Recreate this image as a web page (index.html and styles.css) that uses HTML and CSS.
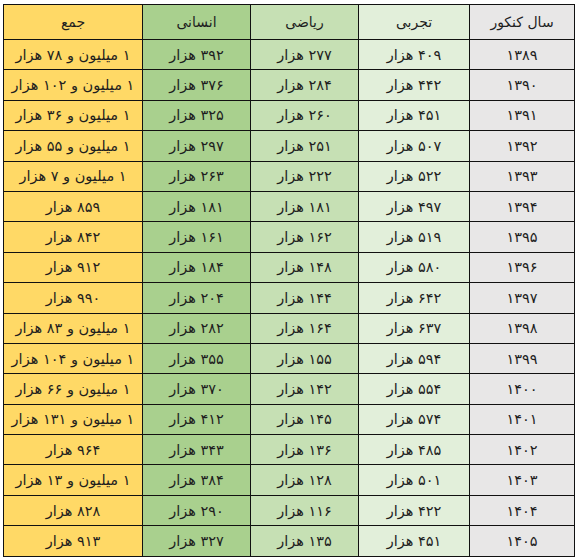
FILE: index.html
```html
<!DOCTYPE html>
<html lang="fa" dir="rtl">
<head>
<meta charset="utf-8">
<title>آمار داوطلبان کنکور</title>
<link rel="stylesheet" href="styles.css">
</head>
<body>
<table class="stats">
  <colgroup>
    <col class="c-year">
    <col class="c-tajrobi">
    <col class="c-riazi">
    <col class="c-ensani">
    <col class="c-total">
  </colgroup>
  <thead>
    <tr>
      <th class="year">سال کنکور</th>
      <th class="tajrobi">تجربی</th>
      <th class="riazi">ریاضی</th>
      <th class="ensani">انسانی</th>
      <th class="total">جمع</th>
    </tr>
  </thead>
  <tbody>
    <tr><td class="year">۱۳۸۹</td><td class="tajrobi">۴۰۹ هزار</td><td class="riazi">۲۷۷ هزار</td><td class="ensani">۳۹۲ هزار</td><td class="total">۱ میلیون و ۷۸ هزار</td></tr>
    <tr><td class="year">۱۳۹۰</td><td class="tajrobi">۴۴۲ هزار</td><td class="riazi">۲۸۴ هزار</td><td class="ensani">۳۷۶ هزار</td><td class="total">۱ میلیون و ۱۰۲ هزار</td></tr>
    <tr><td class="year">۱۳۹۱</td><td class="tajrobi">۴۵۱ هزار</td><td class="riazi">۲۶۰ هزار</td><td class="ensani">۳۲۵ هزار</td><td class="total">۱ میلیون و ۳۶ هزار</td></tr>
    <tr><td class="year">۱۳۹۲</td><td class="tajrobi">۵۰۷ هزار</td><td class="riazi">۲۵۱ هزار</td><td class="ensani">۲۹۷ هزار</td><td class="total">۱ میلیون و ۵۵ هزار</td></tr>
    <tr><td class="year">۱۳۹۳</td><td class="tajrobi">۵۲۲ هزار</td><td class="riazi">۲۲۲ هزار</td><td class="ensani">۲۶۳ هزار</td><td class="total">۱ میلیون و ۷ هزار</td></tr>
    <tr><td class="year">۱۳۹۴</td><td class="tajrobi">۴۹۷ هزار</td><td class="riazi">۱۸۱ هزار</td><td class="ensani">۱۸۱ هزار</td><td class="total">۸۵۹ هزار</td></tr>
    <tr><td class="year">۱۳۹۵</td><td class="tajrobi">۵۱۹ هزار</td><td class="riazi">۱۶۲ هزار</td><td class="ensani">۱۶۱ هزار</td><td class="total">۸۴۲ هزار</td></tr>
    <tr><td class="year">۱۳۹۶</td><td class="tajrobi">۵۸۰ هزار</td><td class="riazi">۱۴۸ هزار</td><td class="ensani">۱۸۴ هزار</td><td class="total">۹۱۲ هزار</td></tr>
    <tr><td class="year">۱۳۹۷</td><td class="tajrobi">۶۴۲ هزار</td><td class="riazi">۱۴۴ هزار</td><td class="ensani">۲۰۴ هزار</td><td class="total">۹۹۰ هزار</td></tr>
    <tr><td class="year">۱۳۹۸</td><td class="tajrobi">۶۳۷ هزار</td><td class="riazi">۱۶۴ هزار</td><td class="ensani">۲۸۲ هزار</td><td class="total">۱ میلیون و ۸۳ هزار</td></tr>
    <tr><td class="year">۱۳۹۹</td><td class="tajrobi">۵۹۴ هزار</td><td class="riazi">۱۵۵ هزار</td><td class="ensani">۳۵۵ هزار</td><td class="total">۱ میلیون و ۱۰۴ هزار</td></tr>
    <tr><td class="year">۱۴۰۰</td><td class="tajrobi">۵۵۴ هزار</td><td class="riazi">۱۴۲ هزار</td><td class="ensani">۳۷۰ هزار</td><td class="total">۱ میلیون و ۶۶ هزار</td></tr>
    <tr><td class="year">۱۴۰۱</td><td class="tajrobi">۵۷۴ هزار</td><td class="riazi">۱۴۵ هزار</td><td class="ensani">۴۱۲ هزار</td><td class="total">۱ میلیون و ۱۳۱ هزار</td></tr>
    <tr><td class="year">۱۴۰۲</td><td class="tajrobi">۴۸۵ هزار</td><td class="riazi">۱۳۶ هزار</td><td class="ensani">۳۴۳ هزار</td><td class="total">۹۶۴ هزار</td></tr>
    <tr><td class="year">۱۴۰۳</td><td class="tajrobi">۵۰۱ هزار</td><td class="riazi">۱۲۸ هزار</td><td class="ensani">۳۸۴ هزار</td><td class="total">۱ میلیون و ۱۳ هزار</td></tr>
    <tr><td class="year">۱۴۰۴</td><td class="tajrobi">۴۲۲ هزار</td><td class="riazi">۱۱۶ هزار</td><td class="ensani">۲۹۰ هزار</td><td class="total">۸۲۸ هزار</td></tr>
    <tr><td class="year">۱۴۰۵</td><td class="tajrobi">۴۵۱ هزار</td><td class="riazi">۱۳۵ هزار</td><td class="ensani">۳۲۷ هزار</td><td class="total">۹۱۳ هزار</td></tr>
  </tbody>
</table>
</body>
</html>
```

FILE: styles.css
```css
html, body {
  margin: 0;
  padding: 0;
  background: #ffffff;
}
body {
  padding: 4px 3px 0 4px;
  font-family: "DejaVu Sans", sans-serif;
  color: #1e1e1e;
}
.stats {
  border-collapse: collapse;
  table-layout: fixed;
  width: 571px;
  font-size: 14.5px;
}
.c-year { width: 105px; }
.c-tajrobi { width: 111px; }
.c-riazi { width: 108px; }
.c-ensani { width: 108px; }
.c-total { width: 139px; }
.stats th,
.stats td {
  border: 1px solid #111;
  text-align: center;
  vertical-align: middle;
  padding: 0 2px;
  white-space: nowrap;
}
.stats th {
  height: 34px;
  font-weight: normal;
  font-size: 14px;
}
.stats td {
  height: 29.4px;
}
.year { background: #e8e7e7; }
.tajrobi { background: #e2efda; }
.riazi { background: #c6e0b4; }
.ensani { background: #a9d08e; }
.total { background: #ffd966; }
```
